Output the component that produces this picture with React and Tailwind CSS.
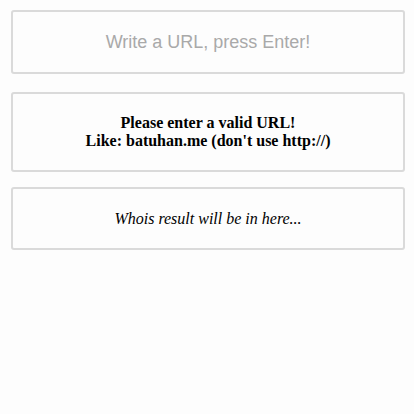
import React from 'react';

function App() {
  return (
    <div className="min-h-[414px] bg-[#fdfdfd] pt-[10px] pl-[11px]">
      <input
        type="text"
        placeholder="Write a URL, press Enter!"
        className="block w-[394px] h-[64px] border-2 border-[#dadada] rounded-[3px] bg-[#fdfdfd] text-center text-[18px] text-[#333] placeholder:text-[#a9a9a9] outline-none font-['Liberation_Sans',Arial,sans-serif]"
      />
      <div className="mt-[18px] w-[394px] h-[80px] border-2 border-[#dadada] rounded-[3px] flex flex-col items-center justify-center font-['Liberation_Serif','Times_New_Roman',serif] font-bold text-[16px] leading-[18px] text-black">
        <span>Please enter a valid URL!</span>
        <span>Like: batuhan.me (don't use http://)</span>
      </div>
      <div className="mt-[15px] w-[394px] h-[63px] border-2 border-[#dadada] rounded-[3px] flex items-center justify-center font-['Liberation_Serif','Times_New_Roman',serif] italic text-[16px] text-black">
        Whois result will be in here...
      </div>
    </div>
  );
}

export default App;
